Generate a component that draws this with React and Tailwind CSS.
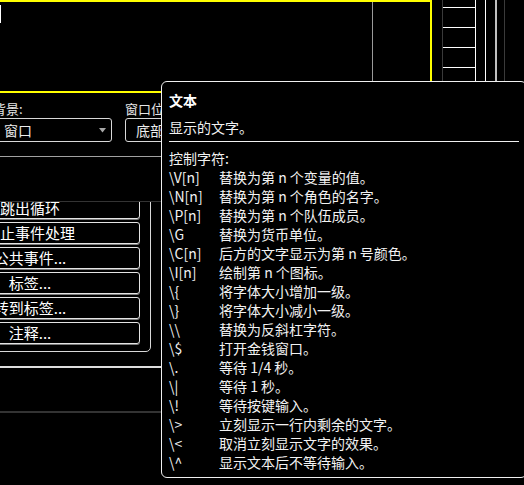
const codes = [
  ["\\V[n]", "替换为第 n 个变量的值。"],
  ["\\N[n]", "替换为第 n 个角色的名字。"],
  ["\\P[n]", "替换为第 n 个队伍成员。"],
  ["\\G", "替换为货币单位。"],
  ["\\C[n]", "后方的文字显示为第 n 号颜色。"],
  ["\\I[n]", "绘制第 n 个图标。"],
  ["\\{", "将字体大小增加一级。"],
  ["\\}", "将字体大小减小一级。"],
  ["\\\\", "替换为反斜杠字符。"],
  ["\\$", "打开金钱窗口。"],
  ["\\.", "等待 1/4 秒。"],
  ["\\|", "等待 1 秒。"],
  ["\\!", "等待按键输入。"],
  ["\\>", "立刻显示一行内剩余的文字。"],
  ["\\<", "取消立刻显示文字的效果。"],
  ["\\^", "显示文本后不等待输入。"],
];

const commands = ["条件分歧...", "循环", "跳出循环", "中止事件处理", "公共事件...", "标签...", "转到标签...", "注释..."];

const font = { fontFamily: '"Noto Sans CJK SC", "Noto Sans", sans-serif' };

function Select({ value }) {
  return (
    <div className="flex h-[24px] items-center justify-between rounded-[3px] border border-[#d8d8d8] pl-[10px] pr-[4px] text-[14px] text-[#ececec]">
      <span className="leading-[20px]">{value}</span>
      <svg width="7" height="5" viewBox="0 0 7 5" className="mr-[1px]">
        <path d="M0 0 L7 0 L3.5 4.5 Z" fill="#a8a8a8" />
      </svg>
    </div>
  );
}

function Tooltip() {
  return (
    <div className="absolute left-[161px] top-[81px] h-[397px] w-[366px] rounded-[6px] border border-[#f0f0f0] bg-black px-[7px] pt-[9px] text-[14px] leading-[19px] text-[#f2f2f2]">
      <p className="font-bold text-white">文本</p>
      <p className="mt-[8px]">显示的文字。</p>
      <div className="mt-[4px] h-px bg-[#f0f0f0]" />
      <p className="mt-[7px]">控制字符:</p>
      {codes.map(([code, desc]) => (
        <div key={code} className="flex">
          <span className="w-[50px] shrink-0">{code}</span>
          <span>{desc}</span>
        </div>
      ))}
    </div>
  );
}

export default function App() {
  return (
    <div className="relative h-[485px] w-[524px] overflow-hidden bg-black text-[#e6e6e6]" style={font}>
      <div className="flex h-[93px]">
        <div className="-ml-[2px] flex h-full w-[434px] shrink-0 border-2 border-[#ffff00]">
          <div className="mt-[3px] h-[18px] w-px bg-white" />
          <div className="w-[371px]" />
          <div className="h-full w-px bg-[#9a9a9a]" />
        </div>
        <div className="ml-[10px] w-[34px] shrink-0 border-l border-r border-l-[#3a3a3a] border-r-white pt-[7px]">
          {[0, 1, 2, 3, 4].map((i) => (
            <div key={i} className="h-[20px] border-t border-white" />
          ))}
        </div>
        <div className="ml-[9px] w-px bg-white" />
        <div className="ml-[9px] w-[2px] bg-[#c0c0c0]" />
        <div className="ml-[7px] w-px bg-[#3a3a3a]" />
      </div>

      <div className="-ml-[7px] mt-[8px] grid w-[260px] grid-cols-[119px_119px] gap-x-[13px] text-[13px]">
        <div>
          <p className="leading-[16px]">背景:</p>
          <div className="mt-[1px]">
            <Select value="窗口" />
          </div>
        </div>
        <div>
          <p className="leading-[16px]">窗口位置:</p>
          <div className="mt-[1px]">
            <Select value="底部" />
          </div>
        </div>
      </div>

      <div className="mt-[14px] h-px w-[180px] bg-[#a0a0a0]" />

      <div className="mt-[44px] h-[167px] w-[180px] overflow-hidden border-t border-b-2 border-t-[#333] border-b-[#dcdcdc]">
        <div className="-ml-[92px] -mt-[64px] flex w-[243px] flex-col gap-[3px] rounded-[5px] border border-[#d8d8d8] pb-[7px] pl-[11px] pr-[10px] pt-[8px]">
          {commands.map((c) => (
            <div
              key={c}
              className="flex h-[22px] items-center justify-center rounded-[3px] border border-[#e4e4e4] text-[15px] leading-[18px] text-white shadow-[0_1px_0_#7a7a7a]"
            >
              {c}
            </div>
          ))}
        </div>
      </div>

      <div className="mt-[43px] h-[2px] w-[180px] bg-[#333]" />

      <Tooltip />
    </div>
  );
}
